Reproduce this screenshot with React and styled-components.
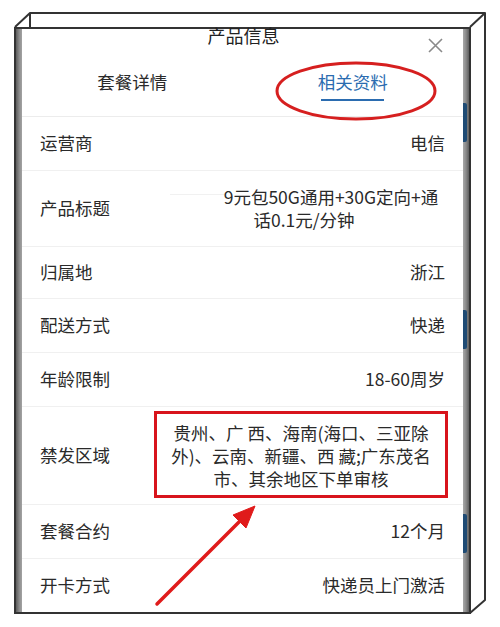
import React from 'react';
import styled, { createGlobalStyle } from 'styled-components';

const GlobalStyle = createGlobalStyle`
  html, body {
    margin: 0;
    padding: 0;
    background: #fff;
  }
  body {
    font-family: "Noto Sans CJK SC", "Noto Sans", sans-serif;
    color: #2a2a2a;
  }
`;

const Stage = styled.div`
  position: relative;
  width: 500px;
  height: 627px;
  padding: 27px 29px 0 14px;
  box-sizing: border-box;
  overflow: hidden;
`;

const Frame = styled.div`
  display: flex;
  width: 457px;
  height: 587px;
  box-sizing: border-box;
  border: 2px solid #333;
  background: #fff;
`;

const LeftBezel = styled.div`
  width: 6px;
  flex-shrink: 0;
  background: linear-gradient(to right, #5c5c5c, #8f8f8f 60%, #a3a3a3);
`;

const RightBezel = styled.div`
  width: 6px;
  flex-shrink: 0;
  display: flex;
  flex-direction: column;
  background: linear-gradient(to right, #a8a8a8, #8a8a8a 50%, #5e5e5e);
`;

const Mark = styled.span`
  display: block;
  width: 4px;
  height: 39px;
  margin-top: ${(p) => p.$top}px;
  background: #1f4b74;
  border-radius: 0 2px 2px 0;
`;

const Screen = styled.div`
  flex: 1;
  display: flex;
  flex-direction: column;
  min-width: 0;
`;

const Header = styled.div`
  position: relative;
  height: 20px;
  display: flex;
  justify-content: center;
`;

const Title = styled.div`
  font-size: 18px;
  line-height: 13px;
  color: #222;
  padding-left: 2px;
`;

const Close = styled.svg`
  position: absolute;
  right: 20px;
  top: 9px;
  width: 15px;
  height: 15px;
`;

const TabBar = styled.div`
  display: flex;
  height: 67px;
  border-bottom: 1px solid #ececec;
  flex-shrink: 0;
`;

const Tab = styled.div`
  position: relative;
  flex: 1;
  display: flex;
  flex-direction: column;
  align-items: center;
  padding-top: 21px;
`;

const TabLabel = styled.span`
  font-size: 17.5px;
  line-height: 24px;
  color: ${(p) => (p.$active ? '#2b6cb0' : '#2a2a2a')};
`;

const Underline = styled.span`
  display: block;
  width: 63px;
  height: 2px;
  margin-top: 5px;
  background: #2b6cb0;
`;

const Ellipse = styled.svg`
  position: absolute;
  left: 31px;
  top: 11px;
  width: 164px;
  height: 62px;
  overflow: visible;
`;

const Row = styled.div`
  display: flex;
  align-items: center;
  justify-content: space-between;
  height: ${(p) => p.$h || 54}px;
  flex: ${(p) => (p.$last ? 1 : 'none')};
  padding: 0 18px 2px;
  box-sizing: border-box;
  border-bottom: ${(p) => (p.$last ? 'none' : '1px solid #f0f0f0')};
`;

const Label = styled.span`
  font-size: 17.5px;
  line-height: 23px;
  color: #2a2a2a;
  white-space: nowrap;
`;

const Value = styled.span`
  font-size: 17.5px;
  line-height: 23px;
  color: #2a2a2a;
  white-space: nowrap;
`;

const MultiValue = styled.div`
  width: 282px;
  font-size: 17.5px;
  line-height: 23px;
  color: #2a2a2a;
  text-align: center;
  white-space: nowrap;
`;

const Erased = styled.span`
  display: inline-block;
  width: 54px;
  height: 9px;
  border-top: 1px solid #f1f1f1;
  vertical-align: middle;
`;

const RegionBox = styled.div`
  width: 294px;
  margin-right: -3px;
  box-sizing: border-box;
  border: 3px solid #d8141c;
  padding: 7px 0 5px;
  font-size: 17.5px;
  line-height: 23px;
  color: #2a2a2a;
  text-align: center;
  white-space: pre;
`;

const Overlay = styled.svg`
  position: absolute;
  left: 0;
  top: 0;
  width: 500px;
  height: 627px;
  pointer-events: none;
`;

const rows = [
  { label: '运营商', value: '电信' },
  { label: '归属地', value: '浙江', h: 52 },
  { label: '配送方式', value: '快递' },
  { label: '年龄限制', value: '18-60周岁' },
];

export default function App() {
  return (
    <>
      <GlobalStyle />
      <Stage>
        <Frame>
          <LeftBezel />
          <Screen>
            <Header>
              <Title>产品信息</Title>
              <Close viewBox="0 0 15 15">
                <path d="M1 1 L14 14 M14 1 L1 14" stroke="#8a8a8a" strokeWidth="1.6" fill="none" />
              </Close>
            </Header>
            <TabBar>
              <Tab>
                <TabLabel>套餐详情</TabLabel>
              </Tab>
              <Tab>
                <TabLabel $active>相关资料</TabLabel>
                <Underline />
                <Ellipse viewBox="0 0 164 62">
                  <ellipse cx="82" cy="31" rx="79" ry="28" stroke="#d61f1f" strokeWidth="3" fill="none" />
                </Ellipse>
              </Tab>
            </TabBar>

            <Row>
              <Label>{rows[0].label}</Label>
              <Value>{rows[0].value}</Value>
            </Row>
            <Row $h={76}>
              <Label>产品标题</Label>
              <MultiValue>
                <Erased />9元包50G通用+30G定向+通
                <br />
                话0.1元/分钟
              </MultiValue>
            </Row>
            {rows.slice(1).map((r) => (
              <Row key={r.label} $h={r.h}>
                <Label>{r.label}</Label>
                <Value>{r.value}</Value>
              </Row>
            ))}
            <Row $h={98}>
              <Label>禁发区域</Label>
              <RegionBox>
                {'贵州、广 西、海南(海口、三亚除\n外)、云南、新疆、西 藏;广东茂名\n市、其余地区下单审核'}
              </RegionBox>
            </Row>
            <Row>
              <Label>套餐合约</Label>
              <Value>12个月</Value>
            </Row>
            <Row $last>
              <Label>开卡方式</Label>
              <Value>快递员上门激活</Value>
            </Row>
          </Screen>
          <RightBezel>
            <Mark $top={74} />
            <Mark $top={168} />
            <Mark $top={165} />
          </RightBezel>
        </Frame>

        <Overlay viewBox="0 0 500 627">
          <g stroke="#333" strokeWidth="2" fill="none" strokeLinejoin="round">
            <path d="M15 27 L30 13 L485 13 L485 600 L470 613" />
            <path d="M30 13 V27" />
            <path d="M470 27 L485 13" />
          </g>
          <g fill="#e01b1b" stroke="#e01b1b">
            <path d="M157 604 L243 518" strokeWidth="3.5" strokeLinecap="round" fill="none" />
            <path d="M255 506 L233 515 L246 528 Z" strokeWidth="1" strokeLinejoin="round" />
          </g>
        </Overlay>
      </Stage>
    </>
  );
}
